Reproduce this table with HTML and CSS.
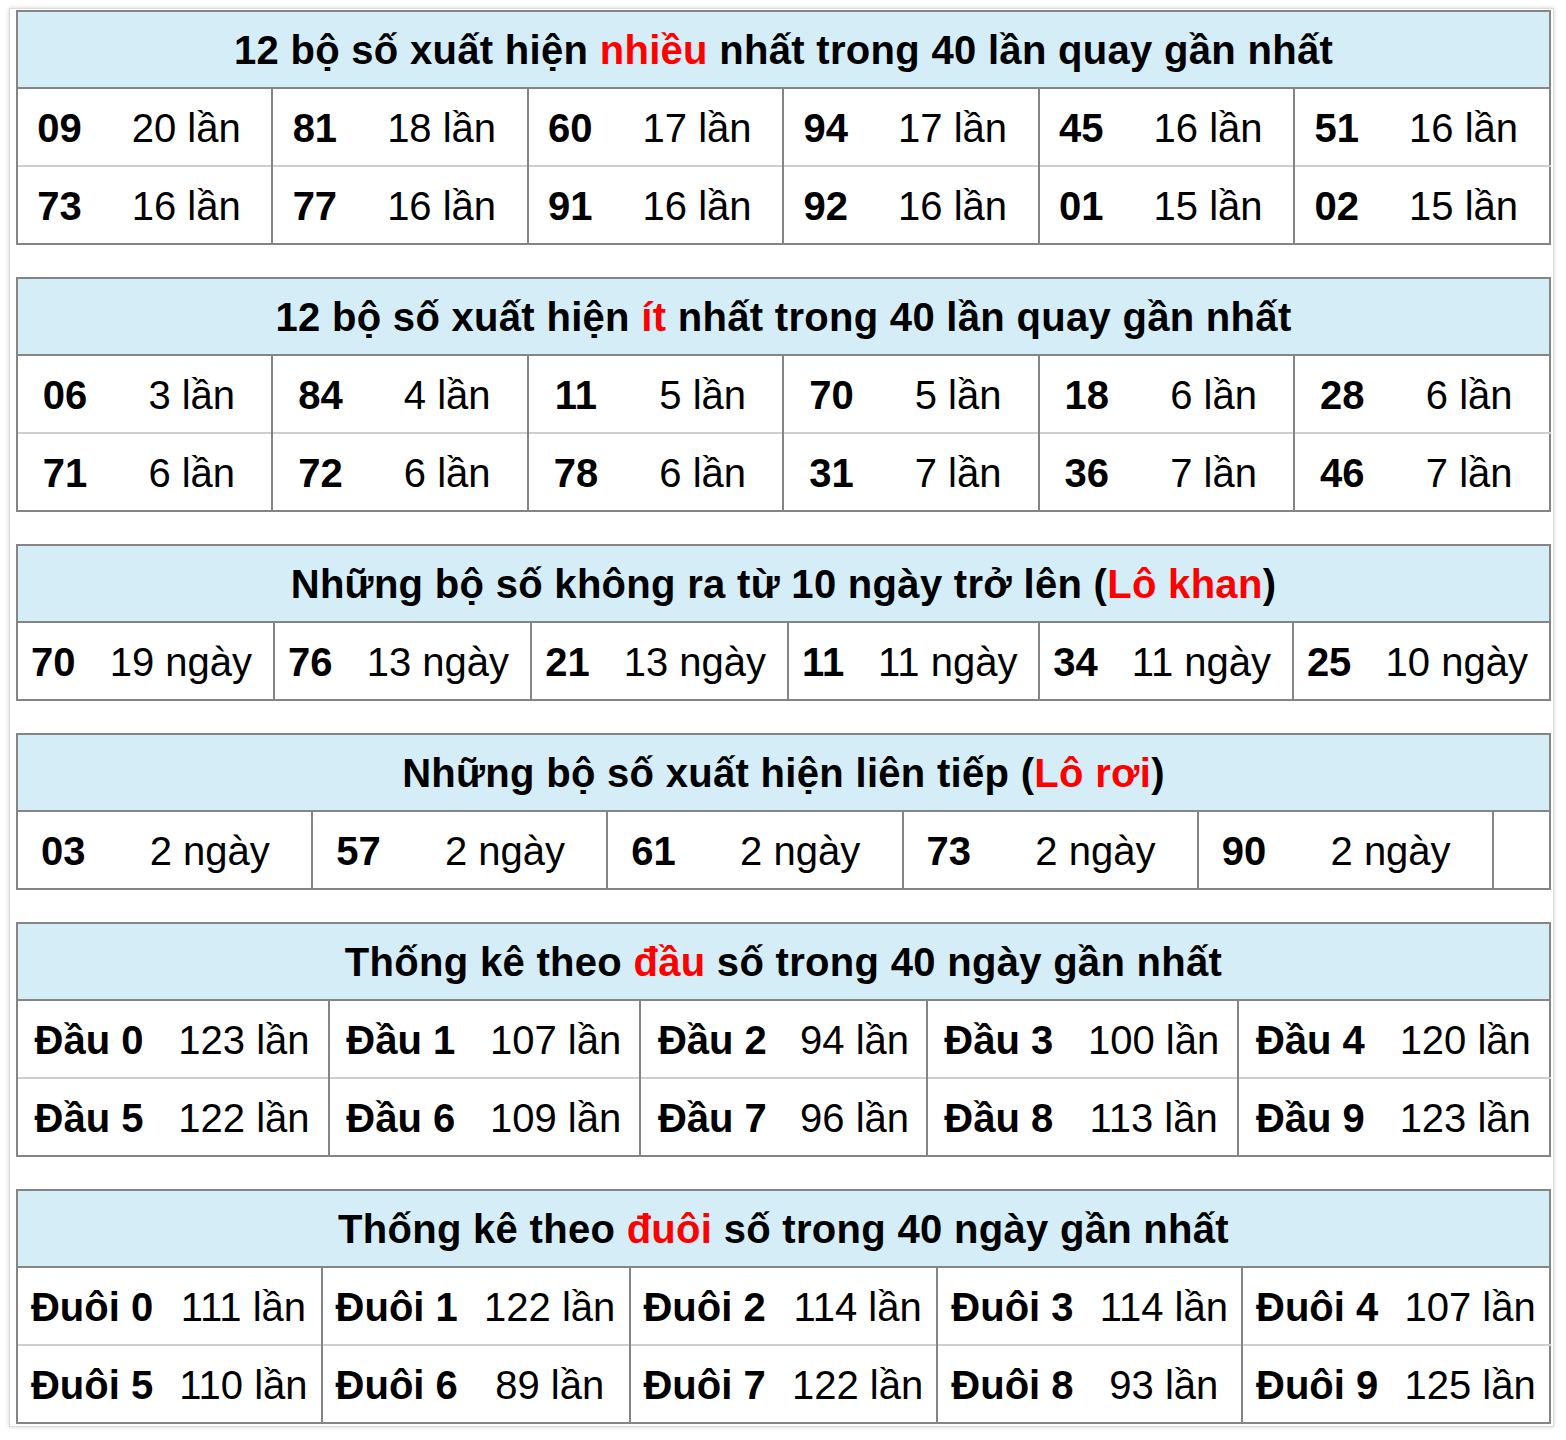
FILE: index.html
```html
<!DOCTYPE html>
<html lang="vi">
<head>
<meta charset="utf-8">
<title>Thống kê</title>
<link rel="stylesheet" href="styles.css">
</head>
<body>
<div class="page">

<table class="stat">
  <tr><th colspan="12">12 bộ số xuất hiện <span class="hl">nhiều</span> nhất trong 40 lần quay gần nhất</th></tr>
  <tr>
    <td class="n">09</td><td class="c">20 lần</td>
    <td class="n">81</td><td class="c">18 lần</td>
    <td class="n">60</td><td class="c">17 lần</td>
    <td class="n">94</td><td class="c">17 lần</td>
    <td class="n">45</td><td class="c">16 lần</td>
    <td class="n">51</td><td class="c">16 lần</td>
  </tr>
  <tr>
    <td class="n">73</td><td class="c">16 lần</td>
    <td class="n">77</td><td class="c">16 lần</td>
    <td class="n">91</td><td class="c">16 lần</td>
    <td class="n">92</td><td class="c">16 lần</td>
    <td class="n">01</td><td class="c">15 lần</td>
    <td class="n">02</td><td class="c">15 lần</td>
  </tr>
</table>

<table class="stat">
  <tr><th colspan="12">12 bộ số xuất hiện <span class="hl">ít</span> nhất trong 40 lần quay gần nhất</th></tr>
  <tr>
    <td class="n">06</td><td class="c">3 lần</td>
    <td class="n">84</td><td class="c">4 lần</td>
    <td class="n">11</td><td class="c">5 lần</td>
    <td class="n">70</td><td class="c">5 lần</td>
    <td class="n">18</td><td class="c">6 lần</td>
    <td class="n">28</td><td class="c">6 lần</td>
  </tr>
  <tr>
    <td class="n">71</td><td class="c">6 lần</td>
    <td class="n">72</td><td class="c">6 lần</td>
    <td class="n">78</td><td class="c">6 lần</td>
    <td class="n">31</td><td class="c">7 lần</td>
    <td class="n">36</td><td class="c">7 lần</td>
    <td class="n">46</td><td class="c">7 lần</td>
  </tr>
</table>

<table class="stat">
  <tr><th colspan="12">Những bộ số không ra từ 10 ngày trở lên (<span class="hl">Lô khan</span>)</th></tr>
  <tr>
    <td class="n">70</td><td class="c">19 ngày</td>
    <td class="n">76</td><td class="c">13 ngày</td>
    <td class="n">21</td><td class="c">13 ngày</td>
    <td class="n">11</td><td class="c">11 ngày</td>
    <td class="n">34</td><td class="c">11 ngày</td>
    <td class="n">25</td><td class="c">10 ngày</td>
  </tr>
</table>

<table class="stat">
  <tr><th colspan="11">Những bộ số xuất hiện liên tiếp (<span class="hl">Lô rơi</span>)</th></tr>
  <tr>
    <td class="n">03</td><td class="c">2 ngày</td>
    <td class="n">57</td><td class="c">2 ngày</td>
    <td class="n">61</td><td class="c">2 ngày</td>
    <td class="n">73</td><td class="c">2 ngày</td>
    <td class="n">90</td><td class="c">2 ngày</td>
    <td class="n empty"></td>
  </tr>
</table>

<table class="stat">
  <tr><th colspan="10">Thống kê theo <span class="hl">đầu</span> số trong 40 ngày gần nhất</th></tr>
  <tr>
    <td class="n">Đầu 0</td><td class="c">123 lần</td>
    <td class="n">Đầu 1</td><td class="c">107 lần</td>
    <td class="n">Đầu 2</td><td class="c">94 lần</td>
    <td class="n">Đầu 3</td><td class="c">100 lần</td>
    <td class="n">Đầu 4</td><td class="c">120 lần</td>
  </tr>
  <tr>
    <td class="n">Đầu 5</td><td class="c">122 lần</td>
    <td class="n">Đầu 6</td><td class="c">109 lần</td>
    <td class="n">Đầu 7</td><td class="c">96 lần</td>
    <td class="n">Đầu 8</td><td class="c">113 lần</td>
    <td class="n">Đầu 9</td><td class="c">123 lần</td>
  </tr>
</table>

<table class="stat">
  <tr><th colspan="10">Thống kê theo <span class="hl">đuôi</span> số trong 40 ngày gần nhất</th></tr>
  <tr>
    <td class="n">Đuôi 0</td><td class="c">111 lần</td>
    <td class="n">Đuôi 1</td><td class="c">122 lần</td>
    <td class="n">Đuôi 2</td><td class="c">114 lần</td>
    <td class="n">Đuôi 3</td><td class="c">114 lần</td>
    <td class="n">Đuôi 4</td><td class="c">107 lần</td>
  </tr>
  <tr>
    <td class="n">Đuôi 5</td><td class="c">110 lần</td>
    <td class="n">Đuôi 6</td><td class="c">89 lần</td>
    <td class="n">Đuôi 7</td><td class="c">122 lần</td>
    <td class="n">Đuôi 8</td><td class="c">93 lần</td>
    <td class="n">Đuôi 9</td><td class="c">125 lần</td>
  </tr>
</table>

</div>
</body>
</html>
```

FILE: styles.css
```css
html, body {
  margin: 0;
  padding: 0;
  background: #ffffff;
}

body {
  font-family: "Liberation Sans", Arial, Helvetica, sans-serif;
  color: #000;
}

.page {
  margin: 8px 12px 8px 9px;
  border: 1px solid #dcdcdc;
  box-shadow: 0 0 4px rgba(0, 0, 0, 0.18);
  padding: 1px 2px 2px 6px;
}

.stat {
  width: 100%;
  border-collapse: collapse;
  border: 2px solid #858585;
  margin: 0 0 32px 0;
  font-size: 40px;
}

.stat:last-child {
  margin-bottom: 0;
}

.stat th {
  background: #d5edf7;
  font-weight: bold;
  text-align: center;
  height: 75px;
  padding: 0 8px;
  line-height: 46px;
  letter-spacing: 0.3px;
  border-bottom: 2px solid #858585;
  white-space: nowrap;
}

.stat td {
  height: 75px;
  padding: 1px 8px 0 8px;
  line-height: 46px;
  text-align: center;
  white-space: nowrap;
}

.stat tr + tr + tr td {
  border-top: 2px solid #cfcfcf;
}

.stat td.n {
  font-weight: bold;
  border-left: 2px solid #858585;
}

.stat td.c {
  font-weight: normal;
}

.stat td.empty {
  width: 39px;
}

.hl {
  color: #ff0000;
}
```
